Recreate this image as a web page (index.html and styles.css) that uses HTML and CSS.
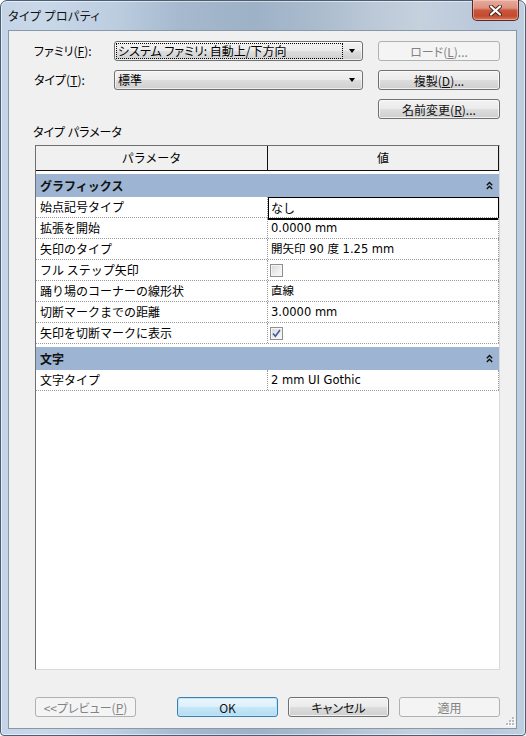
FILE: index.html
```html
<!DOCTYPE html>
<html lang="ja">
<head>
<meta charset="utf-8">
<title>タイプ プロパティ</title>
<link rel="stylesheet" href="styles.css">
</head>
<body>
<div class="window">
  <div class="titlebar">
    <span class="title">タイプ プロパティ</span>
    <button class="close" aria-label="閉じる">
      <svg width="13" height="11" viewBox="0 0 13 11">
        <path d="M2 1.5 L11 9.5 M11 1.5 L2 9.5" stroke="#4a2418" stroke-width="4" stroke-linecap="round" fill="none"/>
        <path d="M2 1.5 L11 9.5 M11 1.5 L2 9.5" stroke="#ffffff" stroke-width="2.2" stroke-linecap="round" fill="none"/>
      </svg>
    </button>
  </div>
  <div class="client">
    <div class="top">
      <span class="lbl">ファミリ(<u>F</u>):</span>
      <div class="combo">
        <span class="combo-text focus">システム ファミリ: 自動上/下方向</span>
        <span class="arrow"></span>
      </div>
      <button class="btn" disabled>ロード(<u>L</u>)...</button>

      <span class="lbl">タイプ(<u>T</u>):</span>
      <div class="combo">
        <span class="combo-text">標準</span>
        <span class="arrow"></span>
      </div>
      <button class="btn">複製(<u>D</u>)...</button>

      <span></span>
      <span></span>
      <button class="btn">名前変更(<u>R</u>)...</button>
    </div>

    <div class="section-label">タイプ パラメータ</div>

    <div class="ptable">
      <div class="thead">
        <div class="th th-name">パラメータ</div>
        <div class="th th-val">値</div>
      </div>

      <div class="group">
        <span>グラフィックス</span>
        <svg class="chev" width="7" height="9" viewBox="0 0 7 9"><path d="M0.8 4.2 L3.5 1.5 L6.2 4.2 M0.8 8 L3.5 5.3 L6.2 8" stroke="#111" stroke-width="1.4" fill="none"/></svg>
      </div>
      <div class="row"><div class="name">始点記号タイプ</div><div class="val sel">なし</div></div>
      <div class="row"><div class="name">拡張を開始</div><div class="val">0.0000 mm</div></div>
      <div class="row"><div class="name">矢印のタイプ</div><div class="val">開矢印 90 度 1.25 mm</div></div>
      <div class="row"><div class="name">フル ステップ矢印</div><div class="val"><span class="check"></span></div></div>
      <div class="row"><div class="name">踊り場のコーナーの線形状</div><div class="val">直線</div></div>
      <div class="row"><div class="name">切断マークまでの距離</div><div class="val">3.0000 mm</div></div>
      <div class="row"><div class="name">矢印を切断マークに表示</div><div class="val"><span class="check checked"><svg width="9" height="9" viewBox="0 0 9 9"><path d="M1 4.5 L3.4 7.2 L8 1" stroke="#3d5a9c" stroke-width="1.6" fill="none"/></svg></span></div></div>

      <div class="group group2">
        <span>文字</span>
        <svg class="chev" width="7" height="9" viewBox="0 0 7 9"><path d="M0.8 4.2 L3.5 1.5 L6.2 4.2 M0.8 8 L3.5 5.3 L6.2 8" stroke="#111" stroke-width="1.4" fill="none"/></svg>
      </div>
      <div class="row"><div class="name">文字タイプ</div><div class="val">2 mm UI Gothic</div></div>
    </div>

    <div class="footer">
      <button class="btn preview" disabled>&lt;&lt;プレビュー(<u>P</u>)</button>
      <button class="btn default">OK</button>
      <button class="btn">キャンセル</button>
      <button class="btn" disabled>適用</button>
    </div>

    <svg class="grip" width="10" height="10" viewBox="0 0 10 10">
      <g fill="#ffffff">
        <rect x="8" y="1" width="2" height="2"/><rect x="5" y="4" width="2" height="2"/><rect x="8" y="4" width="2" height="2"/>
        <rect x="2" y="7" width="2" height="2"/><rect x="5" y="7" width="2" height="2"/><rect x="8" y="7" width="2" height="2"/>
      </g>
      <g fill="#b8bcc2">
        <rect x="7" y="0" width="2" height="2"/><rect x="4" y="3" width="2" height="2"/><rect x="7" y="3" width="2" height="2"/>
        <rect x="1" y="6" width="2" height="2"/><rect x="4" y="6" width="2" height="2"/><rect x="7" y="6" width="2" height="2"/>
      </g>
    </svg>
  </div>
</div>
</body>
</html>
```

FILE: styles.css
```css
html, body {
  margin: 0;
  padding: 0;
}

body {
  width: 526px;
  height: 736px;
  overflow: hidden;
  font-family: "Noto Sans CJK JP", "Noto Sans", sans-serif;
  font-size: 12px;
  color: #000;
  background: #ffffff;
}

.window {
  box-sizing: border-box;
  width: 526px;
  height: 736px;
  border: 1px solid #4a5e76;
  border-radius: 7px 7px 4px 4px;
  background:
    linear-gradient(to right,
      #c4d4e6 0%, #c9d8e9 8%, #bccde0 22%, #a6b9ce 34%, #9db1c7 48%,
      #aabbcd 60%, #bac7d6 70%, #c6d1de 80%, #b9c8da 92%, #c0cfe0 100%);
  box-shadow: inset 0 0 0 1px rgba(255, 255, 255, 0.55);
  display: flex;
  flex-direction: column;
}

.titlebar {
  height: 29px;
  display: flex;
  align-items: flex-start;
  flex: none;
}

.title {
  padding: 6px 0 0 7px;
  line-height: 17px;
  font-size: 12px;
  color: #111;
  font-feature-settings: "palt";
  letter-spacing: 0.4px;
}

.close {
  margin: -1px 6px 0 auto;
  width: 47px;
  height: 21px;
  padding: 0;
  border: 1px solid #5a2a1e;
  border-top: none;
  border-radius: 0 0 5px 5px;
  background: linear-gradient(#e7ab9d 0%, #dc9280 40%, #c9563c 52%, #c44a2e 80%, #d9795f 100%);
  box-shadow: inset 0 0 0 1px rgba(255, 220, 210, 0.45);
  display: flex;
  align-items: center;
  justify-content: center;
}

.close svg {
  display: block;
}

.client {
  flex: 1;
  margin: 0 8px 6px 7px;
  border: 1px solid #8798ad;
  background: #f0f0f0;
  padding: 10px 16px 11px 26px;
  display: flex;
  flex-direction: column;
  position: relative;
}

.top {
  display: grid;
  grid-template-columns: 79px 249px 137px;
  grid-auto-rows: 20px;
  row-gap: 9px;
}

.top > .btn {
  margin-left: 15px;
  width: 122px;
}

.lbl {
  align-self: center;
  margin-left: -1px;
  line-height: 16px;
  font-feature-settings: "palt";
  white-space: nowrap;
}

u {
  text-decoration: underline;
  text-underline-offset: 1px;
}

.combo {
  box-sizing: border-box;
  border: 1px solid #707070;
  border-radius: 3px;
  background: linear-gradient(#f2f2f2 0%, #ebebeb 48%, #dddddd 52%, #cfcfcf 100%);
  box-shadow: inset 0 0 0 1px rgba(255, 255, 255, 0.6);
  display: flex;
  padding: 1px;
}

.combo-text {
  flex: 1;
  border: 1px dotted transparent;
  padding-left: 1px;
  line-height: 14px;
  font-feature-settings: "palt";
  white-space: nowrap;
  overflow: hidden;
}

.combo-text.focus {
  border-color: #000;
}

.arrow {
  width: 18px;
  display: flex;
  align-items: center;
  justify-content: center;
}

.arrow::before {
  content: "";
  width: 0;
  height: 0;
  border-top: 4px solid #000;
  border-left: 3.5px solid transparent;
  border-right: 3.5px solid transparent;
}

.btn {
  box-sizing: border-box;
  height: 20px;
  padding: 0;
  font-family: inherit;
  font-size: 12px;
  font-weight: 400;
  line-height: 17px;
  color: #111;
  border: 1px solid #707070;
  border-radius: 3px;
  background: linear-gradient(#f2f2f2 0%, #ebebeb 48%, #dddddd 52%, #cfcfcf 100%);
  box-shadow: inset 0 0 0 1px rgba(255, 255, 255, 0.7);
  font-feature-settings: "palt";
}

.btn:disabled {
  border-color: #adb2b5;
  background: #f4f4f4;
  color: #838383;
  box-shadow: none;
}

.btn.default {
  border-color: #3c7fb1;
  background: linear-gradient(#eaf6fd 0%, #dcf0fb 48%, #c6e6f8 52%, #b3dcf3 100%);
  box-shadow: inset 0 0 0 1px #c0e6fa;
}

.section-label {
  margin: 6px 0 6px -2px;
  line-height: 14px;
  height: 14px;
  font-feature-settings: "palt";
}

.ptable {
  flex: 1;
  border: 1px solid;
  border-color: #6f6f6f #d9d9d9 #d9d9d9 #6f6f6f;
  background: #ffffff;
  display: flex;
  flex-direction: column;
}

.thead {
  display: grid;
  grid-template-columns: 232px 1fr;
  height: 25px;
  box-sizing: border-box;
  border-bottom: 1px solid #111;
  background: #f0f0f0;
  flex: none;
}

.th {
  text-align: center;
  line-height: 24px;
  box-sizing: border-box;
  border-right: 1px solid #111;
}

.group {
  margin-top: 3px;
  height: 23px;
  background: #9db4d2;
  display: flex;
  align-items: center;
  justify-content: space-between;
  padding: 0 6px 0 4px;
  font-weight: bold;
  color: #111;
  flex: none;
}

.chev {
  display: block;
}

.row {
  display: grid;
  grid-template-columns: 232px 1fr;
  height: 21px;
  box-sizing: border-box;
  border-bottom: 1px dotted #9a9a9a;
  flex: none;
}

.name {
  box-sizing: border-box;
  border-right: 1px dotted #9a9a9a;
  padding-left: 4px;
  line-height: 20px;
  white-space: nowrap;
}

.val {
  box-sizing: border-box;
  border-right: 1px dotted #9a9a9a;
  padding-left: 3px;
  line-height: 20px;
  font-family: "DejaVu Sans", "Noto Sans CJK JP", sans-serif;
  font-size: 11.5px;
  display: flex;
  align-items: center;
  white-space: nowrap;
}

.val.sel {
  border: 1px solid #000;
  border-bottom-width: 2px;
  padding-left: 2px;
  font-family: "Noto Sans CJK JP", sans-serif;
  font-size: 12px;
}

.check {
  box-sizing: border-box;
  width: 13px;
  height: 13px;
  margin-left: -1px;
  border: 1px solid #8f8f8f;
  background: linear-gradient(135deg, #d6d6d6 0%, #efefef 60%, #f8f8f8 100%);
  box-shadow: inset 0 0 0 1px #f4f4f4;
  display: flex;
  align-items: center;
  justify-content: center;
}

.check svg {
  display: block;
}

.footer {
  margin-top: 27px;
  height: 20px;
  display: flex;
  gap: 10px;
  flex: none;
}

.footer .btn {
  width: 101px;
}

.footer .preview {
  margin-right: auto;
}

.grip {
  position: absolute;
  right: 1px;
  bottom: 1px;
}
```
